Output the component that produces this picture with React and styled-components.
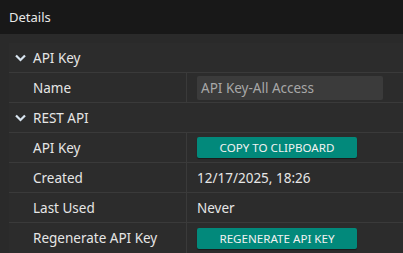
import React from 'react';
import styled, { createGlobalStyle } from 'styled-components';

const GlobalStyle = createGlobalStyle`
	html, body {
		margin: 0;
		padding: 0;
		background: #2a2a2a;
		font-family: 'Noto Sans', 'Open Sans', sans-serif;
	}
	* {
		box-sizing: border-box;
	}
`;

const Page = styled.div`
	width: 403px;
	height: 253px;
	overflow: hidden;
	background: #2a2a2a;
	color: #e6e6e6;
`;

const Header = styled.div`
	height: 34px;
	display: flex;
	align-items: center;
	padding-left: 9px;
	background: #181818;
	font-size: 13px;
	color: #e8e8e8;
`;

const Panel = styled.div`
	margin: 9px 0 0 9px;
	background: #2c2c2c;
`;

const GroupRow = styled.div`
	height: 30px;
	display: flex;
	align-items: center;
	gap: 6px;
	padding-left: 5px;
	border-bottom: 1px solid #3a3a3a;
	font-size: 13.5px;
`;

const Row = styled.div`
	height: 30px;
	display: grid;
	grid-template-columns: 178px 1fr;
	border-bottom: ${p => (p.last ? 'none' : '1px solid #3a3a3a')};
	font-size: 13.5px;
`;

const Label = styled.div`
	display: flex;
	align-items: center;
	padding-left: 24px;
	border-right: 1px solid #3a3a3a;
`;

const Value = styled.div`
	display: flex;
	align-items: center;
	padding-left: 10px;
`;

const Input = styled.div`
	width: 186px;
	height: 24px;
	display: flex;
	align-items: center;
	padding-left: 4px;
	background: #3b3b3b;
	border-radius: 2px;
	color: #a8a8a8;
	font-size: 13.5px;
`;

const Button = styled.button`
	width: 160px;
	height: 21px;
	padding: 0;
	border: none;
	border-radius: 2px;
	background: #02897b;
	color: #f2f2f2;
	font-family: 'Noto Sans', 'Open Sans', sans-serif;
	font-size: 11.6px;
	text-transform: uppercase;
	box-shadow: 0 1px 1px rgba(0, 0, 0, 0.4);
	cursor: pointer;
`;

const Chevron = () => (
	<svg width="13" height="13" viewBox="0 0 13 13">
		<path d="M2 4.5 L6.5 9 L11 4.5" fill="none" stroke="#d8e4f0" strokeWidth="2.2" />
	</svg>
);

export default function App() {
	return (
		<Page>
			<GlobalStyle />
			<Header>Details</Header>
			<Panel>
				<GroupRow>
					<Chevron />
					API Key
				</GroupRow>
				<Row>
					<Label>Name</Label>
					<Value>
						<Input>API Key-All Access</Input>
					</Value>
				</Row>
				<GroupRow>
					<Chevron />
					REST API
				</GroupRow>
				<Row>
					<Label>API Key</Label>
					<Value>
						<Button>Copy to clipboard</Button>
					</Value>
				</Row>
				<Row>
					<Label>Created</Label>
					<Value>12/17/2025, 18:26</Value>
				</Row>
				<Row>
					<Label>Last Used</Label>
					<Value>Never</Value>
				</Row>
				<Row last>
					<Label>Regenerate API Key</Label>
					<Value>
						<Button>Regenerate API key</Button>
					</Value>
				</Row>
			</Panel>
		</Page>
	);
}
